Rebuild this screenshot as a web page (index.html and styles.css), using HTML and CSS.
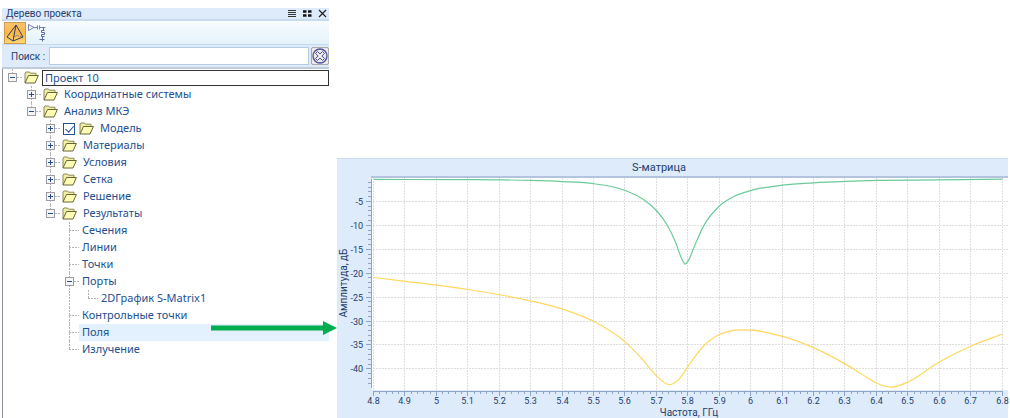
FILE: index.html
```html
<!DOCTYPE html>
<html lang="ru">
<head>
    <meta charset="UTF-8">
    <meta name="viewport" content="width=device-width, initial-scale=1.0">
    <title>Дерево проекта</title>
    <link rel="stylesheet" href="styles.css">
</head>
<body>
    <!-- shared folder icon -->
    <svg class="defs" width="0" height="0">
        <symbol id="folder" viewBox="0 0 15 13">
            <path d="M1 12V2L2 1h3.500l1 1.200h5.500v2.500" fill="#f1eda0" stroke="#8c895c"/>
            <path d="M1 12L4.500 4.500H14.400L11 12Z" fill="#fffdb4" stroke="#66643c"/>
        </symbol>
    </svg>

    <div class="main">
        <div class="panel">
            <div class="titlebar">
                <h1>Дерево проекта</h1>
                <button class="winBtn" aria-label="Список">
                    <svg width="9" height="9" viewBox="0 0 9 9"><path d="M0 1.500h8M0 3.500h8M0 5.500h8M0 7.500h8" stroke="#333"/></svg>
                </button>
                <button class="winBtn" aria-label="Плитка">
                    <svg width="9" height="9" viewBox="0 0 9 9"><path d="M0 2.500h3.500M5 2.500h3.500M0 6.500h3.500M5 6.500h3.500" stroke="#111" stroke-width="2.500"/></svg>
                </button>
                <button class="winBtn" aria-label="Закрыть">
                    <svg width="9" height="9" viewBox="0 0 9 9"><path d="M1 1l7 7M8 1l-7 7" stroke="#222" stroke-width="1.200"/></svg>
                </button>
            </div>

            <div class="toolbar">
                <button class="tool active" aria-label="Модель МКЭ">
                    <svg width="20" height="20" viewBox="0 0 20 20" fill="none" stroke="#2c3e66" stroke-linejoin="round">
                        <path d="M11 2L2 14L8 18L18 14ZM11 2L8 18"/>
                        <path d="M8 14L12 12.500L18 14" stroke-width=".7" stroke-dasharray="1.500 1"/>
                    </svg>
                </button>
                <button class="tool" aria-label="Схема">
                    <svg width="20" height="20" viewBox="0 0 20 20" fill="none" stroke="#7683a8">
                        <path d="M1.500 1.500v6L7 4.500ZM7 4.500h3M10.500 2.500v4M12.500 2.500v4M12.500 4.500h6"/>
                        <path d="M16.500 4.500v3M17.500 7.500h-3v2h3v2h-3v2h3M15.500 13.500v5M12.500 16.500h5" stroke="#5b6a99"/>
                    </svg>
                </button>
            </div>

            <div class="searchRow">
                <label for="search">Поиск :</label>
                <input type="text" id="search">
                <button class="clearBtn" aria-label="Очистить">
                    <svg width="16" height="16" viewBox="0 0 16 16" fill="none" stroke="#4a52a0">
                        <circle cx="8" cy="8" r="7" stroke-width="1.300"/>
                        <path d="M5.500 3.500L8 6L10.500 3.500L12.500 5.500L10 8L12.500 10.500L10.500 12.500L8 10L5.500 12.500L3.500 10.500L6 8L3.500 5.500Z"/>
                    </svg>
                </button>
            </div>

            <ul class="tree">
                <li>
                    <div class="row"><span class="box minus"></span><span class="dash"></span><svg class="folder"><use href="#folder"/></svg><span class="text current">Проект 10</span></div>
                    <ul>
                        <li><div class="row"><span class="box plus"></span><span class="dash"></span><svg class="folder"><use href="#folder"/></svg><span class="text">Координатные системы</span></div></li>
                        <li>
                            <div class="row"><span class="box minus"></span><span class="dash"></span><svg class="folder"><use href="#folder"/></svg><span class="text">Анализ МКЭ</span></div>
                            <ul>
                                <li><div class="row"><span class="box plus"></span><span class="dash"></span><input type="checkbox" id="model" checked><svg class="folder"><use href="#folder"/></svg><label class="text" for="model">Модель</label></div></li>
                                <li><div class="row"><span class="box plus"></span><span class="dash"></span><svg class="folder"><use href="#folder"/></svg><span class="text">Материалы</span></div></li>
                                <li><div class="row"><span class="box plus"></span><span class="dash"></span><svg class="folder"><use href="#folder"/></svg><span class="text">Условия</span></div></li>
                                <li><div class="row"><span class="box plus"></span><span class="dash"></span><svg class="folder"><use href="#folder"/></svg><span class="text">Сетка</span></div></li>
                                <li><div class="row"><span class="box plus"></span><span class="dash"></span><svg class="folder"><use href="#folder"/></svg><span class="text">Решение</span></div></li>
                                <li>
                                    <div class="row"><span class="box minus"></span><span class="dash"></span><svg class="folder"><use href="#folder"/></svg><span class="text">Результаты</span></div>
                                    <ul>
                                        <li><div class="row"><span class="dash long"></span><span class="text">Сечения</span></div></li>
                                        <li><div class="row"><span class="dash long"></span><span class="text">Линии</span></div></li>
                                        <li><div class="row"><span class="dash long"></span><span class="text">Точки</span></div></li>
                                        <li>
                                            <div class="row"><span class="box minus"></span><span class="dash"></span><span class="text">Порты</span></div>
                                            <ul>
                                                <li><div class="row"><span class="dash long"></span><span class="text">2DГрафик S-Matrix1</span></div></li>
                                            </ul>
                                        </li>
                                        <li><div class="row"><span class="dash long"></span><span class="text">Контрольные точки</span></div></li>
                                        <li>
                                            <div class="row">
                                                <span class="dash long"></span><span class="text selected">Поля</span>
                                                <svg class="arrow" width="126" height="16" viewBox="0 0 126 16"><path d="M0 5.500H112V1L126 8L112 15V10.500H0Z" fill="#00ae50"/></svg>
                                            </div>
                                        </li>
                                        <li><div class="row"><span class="dash long"></span><span class="text">Излучение</span></div></li>
                                    </ul>
                                </li>
                            </ul>
                        </li>
                    </ul>
                </li>
            </ul>
        </div>

        <div class="chart">
            <svg id="plot" viewBox="0 0 671 260"></svg>
        </div>
    </div>

    <script src="script.js"></script>
</body>
</html>
```
FILE: styles.css
```css
* {
    box-sizing: border-box;
}

body {
    margin: 0;
    background-color: white;
    font-family: "Noto Sans", "Open Sans", sans-serif;
    font-size: 11px;
    color: #24508f;
}

button {
    padding: 0;
    border: none;
    background: none;
    cursor: pointer;
}

svg {
    display: block;
}

.defs {
    position: absolute;
}

.main {
    display: flex;
    align-items: flex-end;
    gap: 8px;
    min-height: 100vh;
    padding: 8px 2px 0;
}

/* left panel */
.panel {
    flex: 0 0 327px;
    align-self: stretch;
}

.titlebar {
    display: flex;
    align-items: center;
    gap: 6px;
    height: 13px;
    padding: 0 2px 0 4px;
    background-color: #deebfb;
    border-bottom: 2px solid #c9dbee;
}

.titlebar h1 {
    flex: 1;
    margin: 0;
    font-family: Roboto, sans-serif;
    font-size: 10px;
    line-height: 12px;
    font-weight: normal;
    color: #24406a;
}

.toolbar {
    display: flex;
    height: 24px;
    padding: 1px 2px;
    background: linear-gradient(#f8fcff, #e4f2fa);
    border-bottom: 1px solid #c5d9ec;
}

.tool {
    display: flex;
    align-items: center;
    justify-content: center;
    width: 22px;
    height: 22px;
}

.tool.active {
    background: linear-gradient(#f9c571, #fdb644 50%, #ffd673);
    border: 1px solid #cf9a4a;
}

.searchRow {
    display: flex;
    align-items: center;
    gap: 2px;
    height: 24px;
    background-color: #deebfb;
    border-bottom: 2px solid #c0ccd8;
}

.searchRow label {
    width: 45px;
    padding-left: 9px;
    white-space: nowrap;
    font-family: Roboto, sans-serif;
    font-size: 10px;
    color: #24406a;
}

#search {
    flex: 1;
    min-width: 0;
    height: 18px;
    padding: 0 3px;
    border: 1px solid #b4cce6;
    background-color: white;
}

.clearBtn {
    display: flex;
    align-items: center;
    justify-content: center;
    width: 18px;
    height: 18px;
    background-color: #ece9e6;
    border: 1px solid #aaa;
    border-radius: 2px;
}

/* tree */
.tree {
    min-height: calc(100vh - 69px);
    padding-left: 5px;
    border-left: 1px solid #8d8d9c;
}

ul {
    margin: 0;
    padding: 0;
    list-style: none;
}

li {
    background: repeating-linear-gradient(#b4b4b8 0 2px, transparent 2px 3px) 4px 0 / 1px 100% no-repeat;
}

li:last-child {
    background-size: 1px 9px;
}

li ul {
    padding-left: 19px;
}

.row {
    position: relative;
    display: flex;
    align-items: center;
    height: 17px;
}

.box {
    width: 9px;
    height: 9px;
    border: 1px solid #9c9ca6;
    background: linear-gradient(#24508f, #24508f) center / 5px 1px no-repeat, #f4f4f4;
}

.box.plus {
    background: linear-gradient(#24508f, #24508f) center / 5px 1px no-repeat,
        linear-gradient(#24508f, #24508f) center / 1px 5px no-repeat, #f4f4f4;
}

.dash {
    width: 5px;
    height: 1px;
    background: repeating-linear-gradient(to right, #b4b4b8 0 2px, transparent 2px 3px);
}

.dash.long {
    width: 10px;
    margin-left: 4px;
}

.folder {
    width: 15px;
    height: 13px;
    margin: 0 3px 0 2px;
}

.text {
    flex: 1;
    padding: 0 3px;
    line-height: 15px;
    padding-bottom: 2px;
    white-space: nowrap;
}

.text.current {
    height: 16px;
    line-height: 14px;
    padding: 0 2px;
    border: 1px solid #333;
}

.text.selected {
    background-color: #e2f1fd;
}

.row input {
    appearance: none;
    width: 12px;
    height: 12px;
    margin: 0 2px 0 3px;
    border: 1px solid #24508f;
    background-color: white;
}

.row input:checked::before {
    content: "";
    display: block;
    width: 4px;
    height: 7px;
    margin: 0 auto;
    border: solid #24508f;
    border-width: 0 1px 1px 0;
    transform: rotate(40deg);
}

/* arrow from the selected row to the chart */
.arrow {
    position: absolute;
    right: -8px;
    top: -4px;
}

/* chart */
.chart {
    flex: 1;
    min-width: 0;
    background-color: #deebfb;
    box-shadow: inset 0 1px #cbdcf0;
}

#plot {
    width: 100%;
    overflow: visible;
    font-family: Roboto, sans-serif;
    fill: #24406a;
}

.title {
    font-size: 11px;
}

.caption {
    font-size: 10px;
}

.tick {
    font-size: 9px;
}

.area {
    fill: white;
}

.grid {
    fill: none;
    stroke: #dedede;
    stroke-dasharray: 2 1;
}

.frame,
.axis {
    fill: none;
    stroke: #8fa3c2;
}

.frame {
    stroke: #b4c4de;
    stroke-width: 2;
}

.s11 {
    fill: none;
    stroke: #6bca98;
    stroke-width: 1.2;
}

.s21 {
    fill: none;
    stroke: #ffd75e;
    stroke-width: 1.2;
}
```
FILE: script.js
```js
var plot = document.getElementById('plot');

// [frequency in GHz, amplitude in dB]
var s11 = [
    [4.8, -0.3], [5.1, -0.35], [5.2, -0.4], [5.3, -0.5], [5.4, -0.75], [5.5, -1.2],
    [5.6, -2.6], [5.66, -4.6], [5.7, -6.9], [5.73, -9.5], [5.76, -13.5], [5.78, -17],
    [5.79, -18], [5.8, -17.3], [5.82, -14.2], [5.85, -9.9], [5.9, -5.8], [5.95, -3.7],
    [6.0, -2.6], [6.1, -1.5], [6.2, -1], [6.3, -0.7], [6.4, -0.5], [6.6, -0.4], [6.8, -0.25]
];
var s21 = [
    [4.8, -20.8], [4.9, -21.6], [5.0, -22.4], [5.1, -23.3], [5.2, -24.4], [5.3, -25.7],
    [5.4, -27.4], [5.5, -30], [5.6, -34.3], [5.65, -37.6], [5.7, -41.4], [5.74, -43.2],
    [5.77, -42.1], [5.8, -39.3], [5.85, -35], [5.9, -32.7], [5.95, -31.8], [6.0, -31.8],
    [6.1, -33.1], [6.2, -35.5], [6.3, -38.9], [6.35, -40.9], [6.4, -42.9], [6.45, -43.7],
    [6.5, -42.6], [6.6, -38.4], [6.7, -35.1], [6.8, -32.6]
];

function px(f) {
    return 37 + (f - 4.8) * 314.25;
}

function py(db) {
    return 20 - db * 4.785;
}

function add(tag, attrs, text) {
    var el = document.createElementNS('http://www.w3.org/2000/svg', tag);
    for (var key in attrs) {
        el.setAttribute(key, attrs[key]);
    }
    if (text) el.textContent = text;
    plot.appendChild(el);
}

// slope at point i, the nearer neighbour counts more
function slope(p, i) {
    if (i == 0) return (p[1][1] - p[0][1]) / (p[1][0] - p[0][0]);
    var h0 = p[i][0] - p[i - 1][0];
    var d0 = (p[i][1] - p[i - 1][1]) / h0;
    if (i == p.length - 1) return d0;
    var h1 = p[i + 1][0] - p[i][0];
    var d1 = (p[i + 1][1] - p[i][1]) / h1;
    return (d0 * h1 + d1 * h0) / (h0 + h1);
}

// smooth line through all the points
function curve(data) {
    var p = data.map(function (d) { return [px(d[0]), py(d[1])]; });
    var d = 'M' + p[0];
    for (var i = 0; i < p.length - 1; i++) {
        var b = p[i], c = p[i + 1];
        var w = (c[0] - b[0]) / 3;
        d += 'C' + [b[0] + w, b[1] + slope(p, i) * w, c[0] - w, c[1] - slope(p, i + 1) * w, c[0], c[1]];
    }
    return d;
}

add('rect', { class: 'area', x: 35, y: 18, width: 636, height: 214 });
add('path', { class: 'frame', d: 'M34 19H671' });

var grid = '';
var axis = 'M34.5 21V230M37 233.5H666';
var i, x, y;

for (i = 0; i <= 100; i++) {
    x = Math.round(px(4.8 + i * 0.02)) - 0.5;
    axis += 'M' + x + ' 233v' + (i % 5 ? 3 : 5);
    if (i % 5 == 0) {
        grid += 'M' + x + ' 20V232';
        add('text', { class: 'tick', x: x, y: 246, 'text-anchor': 'middle' }, String(+(4.8 + i * 0.02).toFixed(1)));
    }
}
for (i = 1; i <= 43; i++) {
    y = Math.round(py(-i)) - 0.5;
    axis += 'M34 ' + y + 'h' + (i % 5 ? -3 : -5);
    if (i % 5 == 0) {
        grid += 'M36 ' + y + 'H671';
        add('text', { class: 'tick', x: 26, y: y + 3, 'text-anchor': 'end' }, String(-i));
    }
}

add('path', { class: 'grid', d: grid });
add('path', { class: 'axis', d: axis });
add('path', { class: 's11', d: curve(s11) });
add('path', { class: 's21', d: curve(s21) });

add('text', { class: 'title', x: 322, y: 13, 'text-anchor': 'middle' }, 'S-матрица');
add('text', { class: 'caption', x: 352, y: 258, 'text-anchor': 'middle' }, 'Частота, ГГц');
add('text', { class: 'caption', transform: 'translate(10 125) rotate(-90)', 'text-anchor': 'middle' }, 'Амплитуда, дБ');
```
